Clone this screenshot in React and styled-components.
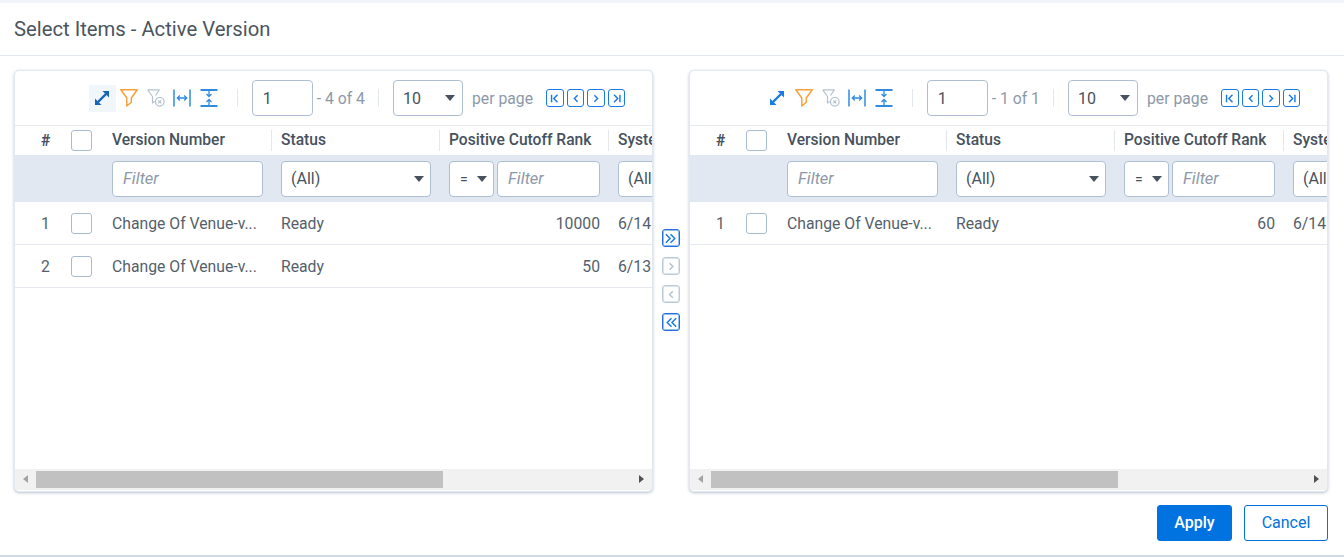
import styled, { createGlobalStyle } from "styled-components";

const GlobalStyle = createGlobalStyle`
    html, body {
        margin: 0;
        padding: 0;
        background: #FFFFFF;
        overflow: hidden;
    }
    * {
        box-sizing: border-box;
    }
    body {
        font-family: Roboto, "Liberation Sans", sans-serif;
        color: #4a5568;
    }
`;

const COLUMNS = "46px 41px 169px 168px 169px 120px";

const leftRows = [
    { n: 1, name: "Change Of Venue-v...", status: "Ready", rank: "10000", date: "6/14" },
    { n: 2, name: "Change Of Venue-v...", status: "Ready", rank: "50", date: "6/13" },
];

const rightRows = [
    { n: 1, name: "Change Of Venue-v...", status: "Ready", rank: "60", date: "6/14" },
];

function ExpandIcon({ color }) {
    return (
        <svg width="18" height="18" viewBox="0 0 18 18" fill={color} stroke={color}>
            <path d="M5 13 13 5" strokeWidth="2.400" />
            <path d="M9.500 2H16V8.500z" stroke="none" />
            <path d="M2 9.500V16H8.500z" stroke="none" />
        </svg>
    );
}

function FilterIcon() {
    return (
        <svg width="18" height="18" viewBox="0 0 18 18" fill="none" stroke="#f7a23a" strokeWidth="1.500">
            <path d="M.8.8h16.400L11.300 9v4.200L6.800 17V9z" strokeLinejoin="round" />
        </svg>
    );
}

function ClearFilterIcon() {
    return (
        <svg width="18" height="18" viewBox="0 0 18 18" fill="none" stroke="#b4c2d0" strokeWidth="1.200">
            <path d="M.7.8h11.600L8.500 6.500M.7.800 5.500 7.500v6.500l2-1.500" strokeLinejoin="round" />
            <circle cx="12.800" cy="12.800" r="4.300" />
            <path d="M11.300 11.300l3 3M14.300 11.300l-3 3" />
        </svg>
    );
}

function FitWidthIcon() {
    return (
        <svg width="18" height="18" viewBox="0 0 18 18" fill="none" stroke="#2f8be0" strokeWidth="1.300">
            <path d="M1 .5v17M17 .5v17" strokeWidth="1.500" />
            <path d="M4.500 9h9M6.800 6.500 4.300 9l2.500 2.500M11.200 6.500 13.700 9l-2.500 2.500" />
        </svg>
    );
}

function FitHeightIcon() {
    return (
        <svg width="18" height="18" viewBox="0 0 18 18" fill="none" stroke="#2f8be0" strokeWidth="1.300">
            <path d="M.5 1h17M.5 17h17" strokeWidth="1.800" />
            <path d="M9 2v5.500M6.500 5 9 7.500 11.500 5M9 16v-5.500M6.500 13 9 10.500 11.500 13" />
        </svg>
    );
}

function PagerGlyph({ type }) {
    const paths = {
        first: "M5 4.500v8M11.500 4.500l-4 4 4 4",
        prev: "M10.500 5l-3.500 3.500 3.500 3.500",
        next: "M7 5l3.500 3.500-3.500 3.500",
        last: "M12 4.500v8M5.500 4.500l4 4-4 4",
        all: "M3 4l4.500 4.500L3 13M8 4l4.500 4.500L8 13",
        allBack: "M9 4l-4.500 4.500L9 13M14 4l-4.500 4.500L14 13",
    };
    return (
        <svg width="17" height="17" viewBox="0 0 17 17" fill="none" stroke="currentColor" strokeWidth="1.600">
            <path d={paths[type]} />
        </svg>
    );
}

function GridPanel({ rows, total, active }) {
    return (
        <Panel>
            <Toolbar>
                <IconGroup>
                    <IconBox $active={active}>
                        <ExpandIcon color={active ? "#1565b8" : "#1a7be6"} />
                    </IconBox>
                    <IconBox><FilterIcon /></IconBox>
                    <IconBox><ClearFilterIcon /></IconBox>
                    <IconBox><FitWidthIcon /></IconBox>
                    <IconBox><FitHeightIcon /></IconBox>
                </IconGroup>
                <Divider />
                <PageInput>1</PageInput>
                <Muted>- {total} of {total}</Muted>
                <Divider />
                <PageSize>
                    10
                    <Caret />
                </PageSize>
                <PerPage>per page</PerPage>
                <Pager>
                    <PagerButton><PagerGlyph type="first" /></PagerButton>
                    <PagerButton><PagerGlyph type="prev" /></PagerButton>
                    <PagerButton><PagerGlyph type="next" /></PagerButton>
                    <PagerButton><PagerGlyph type="last" /></PagerButton>
                </Pager>
            </Toolbar>
            <Table>
                <HeaderRow>
                    <HashCell>#</HashCell>
                    <CheckCell><Checkbox /></CheckCell>
                    <HeaderCell $first>Version Number</HeaderCell>
                    <HeaderCell>Status</HeaderCell>
                    <HeaderCell>Positive Cutoff Rank</HeaderCell>
                    <HeaderCell>System</HeaderCell>
                </HeaderRow>
                <FilterRow>
                    <span />
                    <span />
                    <FilterCell><FilterInput>Filter</FilterInput></FilterCell>
                    <FilterCell>
                        <FilterSelect>
                            (All)
                            <Caret />
                        </FilterSelect>
                    </FilterCell>
                    <FilterCell>
                        <OperatorSelect>
                            =
                            <Caret />
                        </OperatorSelect>
                        <FilterInput>Filter</FilterInput>
                    </FilterCell>
                    <FilterCell><FilterSelect>(All)</FilterSelect></FilterCell>
                </FilterRow>
                {rows.map((row) => (
                    <DataRow key={row.n}>
                        <NumberCell>{row.n}</NumberCell>
                        <CheckCell><Checkbox /></CheckCell>
                        <TextCell>{row.name}</TextCell>
                        <TextCell>{row.status}</TextCell>
                        <RankCell>{row.rank}</RankCell>
                        <TextCell>{row.date}</TextCell>
                    </DataRow>
                ))}
            </Table>
            <Scrollbar>
                <ScrollArrow $left />
                <ScrollTrack>
                    <ScrollThumb />
                </ScrollTrack>
                <ScrollArrow />
            </Scrollbar>
        </Panel>
    );
}

export default function App() {
    return (
        <Page>
            <GlobalStyle />
            <TopStrip />
            <Title>Select Items - Active Version</Title>
            <Content>
                <GridPanel rows={leftRows} total={4} active />
                <Transfer>
                    <TransferButton $on><PagerGlyph type="all" /></TransferButton>
                    <TransferButton><PagerGlyph type="next" /></TransferButton>
                    <TransferButton><PagerGlyph type="prev" /></TransferButton>
                    <TransferButton $on><PagerGlyph type="allBack" /></TransferButton>
                </Transfer>
                <GridPanel rows={rightRows} total={1} />
            </Content>
            <Footer>
                <ApplyButton>Apply</ApplyButton>
                <CancelButton>Cancel</CancelButton>
            </Footer>
        </Page>
    );
}

const Page = styled.div`
    width: 1344px;
    height: 557px;
    display: flex;
    flex-direction: column;
    border-bottom: 2px solid #d3d9e2;
`;

const TopStrip = styled.div`
    height: 3px;
    background: #f1f4f8;
`;

const Title = styled.h1`
    margin: 0;
    height: 53px;
    padding: 0 0 1px 14px;
    display: flex;
    align-items: center;
    font-size: 20.250px;
    font-weight: 400;
    color: #4a5560;
    border-bottom: 1px solid #e3e8ee;
`;

const Content = styled.div`
    display: grid;
    grid-template-columns: 639px 36px 639px;
    padding: 14px 0 0 14px;
`;

const Panel = styled.div`
    height: 422px;
    display: flex;
    flex-direction: column;
    border: 1px solid #e2e8f1;
    border-radius: 5px;
    box-shadow: 0 1px 3px rgba(120, 135, 160, 0.5);
    overflow: hidden;
    background: #FFFFFF;
`;

const Toolbar = styled.div`
    height: 55px;
    flex: none;
    display: flex;
    align-items: center;
    justify-content: flex-end;
    padding: 0 27px 0 0;
    border-bottom: 1px solid #e6eaf0;
`;

const IconGroup = styled.div`
    display: flex;
    align-items: center;
    margin-right: 1px;
`;

const IconBox = styled.div`
    width: 26.800px;
    height: 27px;
    display: flex;
    align-items: center;
    justify-content: center;
    background: ${(props) => (props.$active ? "#f1f6fa" : "transparent")};
`;

const Divider = styled.div`
    width: 1px;
    height: 18px;
    background: #e3e8ee;
    margin: 0 14px 0 13px;
`;

const PageInput = styled.div`
    width: 61px;
    height: 36px;
    display: flex;
    align-items: center;
    padding-left: 10px;
    border: 1px solid #aebfd3;
    border-radius: 4px;
    font-size: 16px;
    color: #47525e;
`;

const Muted = styled.span`
    margin-left: 4px;
    color: #8d99a8;
    font-size: 15.750px;
    white-space: nowrap;
`;

const PageSize = styled.div`
    width: 70px;
    height: 36px;
    display: flex;
    align-items: center;
    justify-content: space-between;
    padding: 0 7px 0 9px;
    border: 1px solid #aebfd3;
    border-radius: 4px;
    font-size: 16px;
    color: #47525e;
`;

const Caret = styled.i`
    width: 0;
    height: 0;
    border-left: 5px solid transparent;
    border-right: 5px solid transparent;
    border-top: 6px solid #47525e;
`;

const PerPage = styled.span`
    margin-left: 9px;
    color: #8d99a8;
    font-size: 15.750px;
    white-space: nowrap;
`;

const Pager = styled.div`
    margin-left: 13px;
    display: flex;
    gap: 3px;
`;

const PagerButton = styled.div`
    width: 17.500px;
    height: 18px;
    display: flex;
    align-items: center;
    justify-content: center;
    border: 1px solid #1a7be6;
    border-radius: 3px;
    color: #1a7be6;
`;

const Table = styled.div`
    flex: 1;
    overflow: hidden;
    font-size: 15.750px;
`;

const HeaderRow = styled.div`
    height: 29px;
    display: grid;
    grid-template-columns: ${COLUMNS};
    align-items: center;
    background: #FFFFFF;
    color: #47525e;
    font-weight: 500;
    font-size: 15.600px;
`;

const FilterRow = styled.div`
    height: 47px;
    display: grid;
    grid-template-columns: ${COLUMNS};
    align-items: center;
    background: #e1e8f1;
`;

const DataRow = styled.div`
    height: 43px;
    display: grid;
    grid-template-columns: ${COLUMNS};
    align-items: center;
    border-bottom: 1px solid #e6eaf0;
    color: #555f6b;
    &:nth-child(3) {
        padding-top: 1px;
    }
`;

const HashCell = styled.div`
    padding-left: 26px;
    font-weight: 700;
`;

const NumberCell = styled.div`
    padding-left: 26px;
`;

const CheckCell = styled.div`
    padding-left: 10px;
    display: flex;
    align-items: center;
`;

const Checkbox = styled.div`
    width: 21px;
    height: 21px;
    background: #FFFFFF;
    border: 1px solid #a9bbd0;
    border-radius: 3px;
`;

const HeaderCell = styled.div`
    height: 21px;
    padding: 0 0 2px ${(props) => (props.$first ? "10px" : "9px")};
    display: flex;
    align-items: center;
    white-space: nowrap;
    overflow: hidden;
    border-left: ${(props) => (props.$first ? "none" : "1px solid #e3e8ee")};
`;

const FilterCell = styled.div`
    padding: 0 8px 0 10px;
    display: flex;
    gap: 3px;
`;

const FilterInput = styled.div`
    flex: 1;
    height: 36px;
    display: flex;
    align-items: center;
    padding-left: 10px;
    background: #FFFFFF;
    border: 1px solid #aebfd3;
    border-radius: 4px;
    color: #8d99a8;
    font-style: italic;
    font-size: 16.500px;
`;

const FilterSelect = styled.div`
    flex: 1;
    height: 36px;
    display: flex;
    align-items: center;
    justify-content: space-between;
    padding: 0 6px 0 9px;
    background: #FFFFFF;
    border: 1px solid #aebfd3;
    border-radius: 4px;
    color: #47525e;
    font-size: 16px;
`;

const OperatorSelect = styled(FilterSelect)`
    flex: none;
    width: 45px;
    font-size: 14px;
    padding: 0 6px 0 10px;
`;

const TextCell = styled.div`
    padding-left: 10px;
    white-space: nowrap;
    overflow: hidden;
`;

const RankCell = styled.div`
    padding-right: 8px;
    text-align: right;
`;

const Scrollbar = styled.div`
    height: 21px;
    flex: none;
    display: flex;
    align-items: center;
    background: #f1f1f1;
    margin-bottom: 1px;
`;

const ScrollArrow = styled.div`
    width: 21px;
    height: 100%;
    flex: none;
    position: relative;
    &::after {
        content: "";
        position: absolute;
        top: 6px;
        left: 8px;
        border-top: 4.500px solid transparent;
        border-bottom: 4.500px solid transparent;
        border-right: ${(props) => (props.$left ? "5px solid #a3a3a3" : "none")};
        border-left: ${(props) => (props.$left ? "none" : "5px solid #505050")};
    }
`;

const ScrollTrack = styled.div`
    flex: 1;
    height: 100%;
    display: flex;
    align-items: center;
`;

const ScrollThumb = styled.div`
    width: 407px;
    height: 17px;
    background: #c1c1c1;
`;

const Transfer = styled.div`
    display: flex;
    flex-direction: column;
    align-items: center;
    justify-content: center;
    gap: 10px;
    padding-bottom: 2px;
`;

const TransferButton = styled.div`
    width: 18px;
    height: 18px;
    display: flex;
    align-items: center;
    justify-content: center;
    border: 1px solid ${(props) => (props.$on ? "#2a6be0" : "#bccada")};
    box-shadow: inset 0 0 0 1px ${(props) => (props.$on ? "#8fc0f5" : "#dbe3ec")};
    border-radius: 3px;
    color: ${(props) => (props.$on ? "#1a7be6" : "#b4c2d0")};
`;

const Footer = styled.div`
    display: flex;
    justify-content: flex-end;
    gap: 12px;
    padding: 13px 16px 0 0;
`;

const ApplyButton = styled.button`
    width: 75px;
    height: 36px;
    padding: 0 0 2px;
    background: #0073e0;
    border: 1px solid #0073e0;
    border-radius: 3px;
    color: #FFFFFF;
    font: 500 16px Roboto, sans-serif;
`;

const CancelButton = styled.button`
    width: 84px;
    height: 36px;
    padding: 0 0 2px;
    background: #FFFFFF;
    border: 1px solid #0073e0;
    border-radius: 3px;
    color: #0073e0;
    font: 400 16px Roboto, sans-serif;
`;
